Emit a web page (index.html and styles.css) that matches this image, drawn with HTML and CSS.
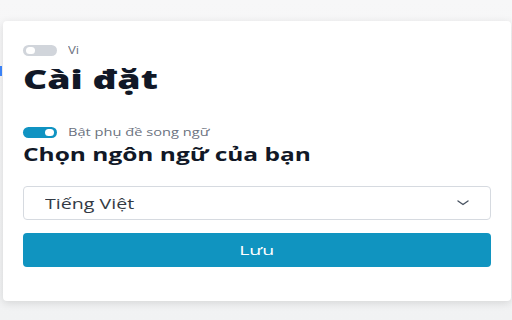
FILE: index.html
```html
<!DOCTYPE html>
<html lang="vi">
<head>
<meta charset="utf-8">
<link rel="stylesheet" href="styles.css">
</head>
<body>
<div class="edge"></div>
<div class="card">
  <div class="toggle-row first">
    <span class="toggle off"><span class="knob"></span></span>
    <span class="toggle-label"><span class="wide">Vi</span></span>
  </div>
  <h1 class="title"><span class="wide">Cài đặt</span></h1>
  <div class="toggle-row second">
    <span class="toggle on"><span class="knob"></span></span>
    <span class="toggle-label"><span class="wide label-wide">Bật phụ đề song ngữ</span></span>
  </div>
  <h2 class="subtitle"><span class="wide">Chọn ngôn ngữ của bạn</span></h2>
  <div class="select">
    <span class="select-text"><span class="wide">Tiếng Việt</span></span>
    <svg class="chevron" width="14" height="8" viewBox="0 0 14 8"><path d="M2 2 L7 5.5 L12 2" fill="none" stroke="#4b5563" stroke-width="1.4" stroke-linecap="round" stroke-linejoin="round"/></svg>
  </div>
  <button class="save"><span class="wide center">Lưu</span></button>
</div>
</body>
</html>
```
FILE: styles.css
```css
html, body {
  margin: 0;
  padding: 0;
}
body {
  width: 512px;
  height: 320px;
  overflow: hidden;
  background: linear-gradient(#f7f7f8, #f1f2f3);
  font-family: "Open Sans", "Noto Sans", sans-serif;
  position: relative;
}
.edge {
  position: absolute;
  left: 0;
  top: 66px;
  width: 2px;
  height: 10px;
  background: #3b82f6;
}
.card {
  margin: 21px 0 0 3px;
  width: 468px;
  height: 280px;
  padding: 0 20px;
  background: #fff;
  border-radius: 4px;
  box-shadow: 0 2px 8px rgba(0, 0, 0, 0.12);
  overflow: hidden;
}
.wide {
  display: inline-block;
  transform-origin: left center;
  transform: scaleX(1.44);
}
.wide.center {
  transform-origin: center center;
  transform: scaleX(1.5);
}
.toggle-row {
  display: flex;
  align-items: center;
  gap: 11px;
  height: 12px;
}
.toggle-row.first {
  margin-top: 23px;
}
.toggle-row.second {
  margin-top: 30px;
}
.toggle {
  display: flex;
  align-items: center;
  width: 34px;
  height: 11px;
  border-radius: 6px;
  padding: 0 3px;
  box-sizing: border-box;
}
.toggle.off {
  background: #d1d5db;
  justify-content: flex-start;
}
.toggle.on {
  background: #1093c2;
  justify-content: flex-end;
}
.knob {
  width: 9px;
  height: 7px;
  border-radius: 4px;
  background: #fff;
}
.toggle-label {
  font-size: 11px;
  color: #6b7280;
  line-height: 12px;
}
.toggle-label .wide {
  transform: scaleX(1.2);
}
.toggle-label .label-wide {
  transform: scaleX(1.33);
}
.title {
  margin: 6px 0 0 0;
  font-size: 26px;
  line-height: 34px;
  font-weight: 800;
  color: #111827;
}
.subtitle {
  margin: 6px 0 0 0;
  font-size: 17px;
  line-height: 22px;
  font-weight: 700;
  color: #111827;
}
.select {
  margin-top: 20px;
  height: 34px;
  border: 1px solid #d6dae0;
  border-radius: 4px;
  box-sizing: border-box;
  display: flex;
  align-items: center;
  justify-content: space-between;
  padding: 0 20px 0 21px;
}
.select-text {
  font-size: 14px;
  color: #333a44;
}
.select-text .wide {
  transform: scaleX(1.4);
}
.chevron {
  display: block;
}
.save {
  display: block;
  margin-top: 13px;
  width: 100%;
  height: 34px;
  border: none;
  border-radius: 4px;
  background: #1094c0;
  color: #fff;
  font-family: "Open Sans", "Noto Sans", sans-serif;
  font-size: 13px;
}
```
